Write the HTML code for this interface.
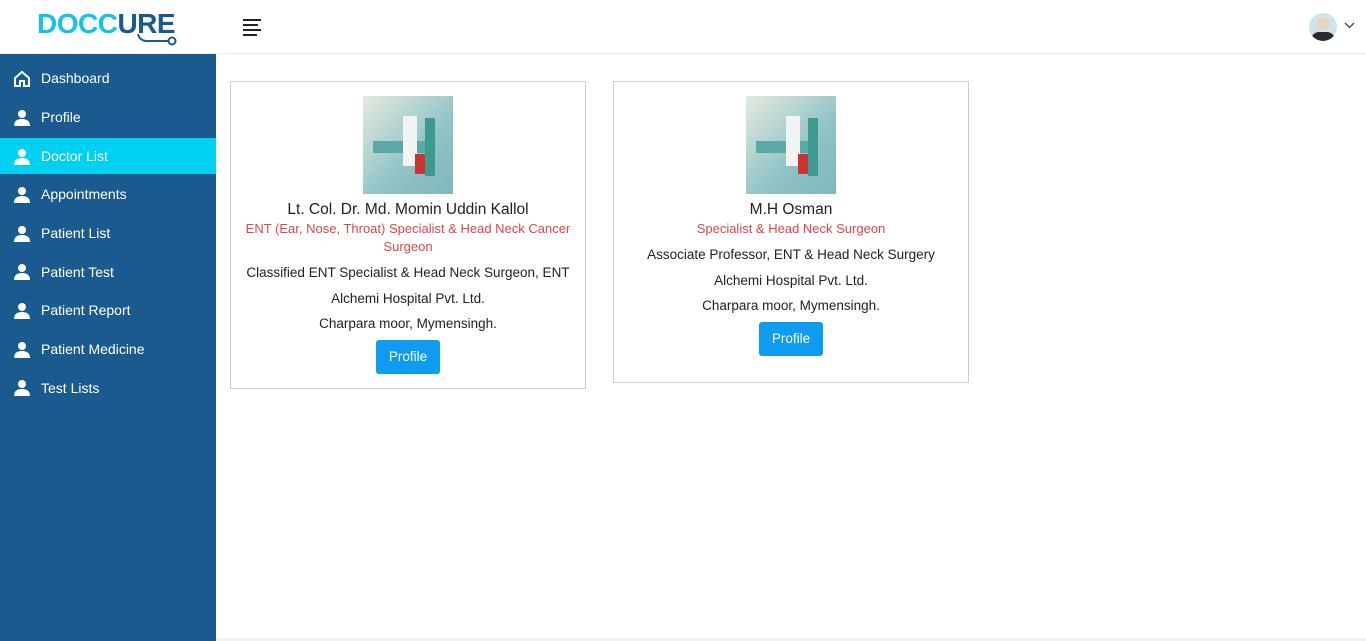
<!DOCTYPE html>
<html><head><meta charset="utf-8"><style>
*{margin:0;padding:0;box-sizing:border-box}
body{width:1366px;height:641px;overflow:hidden;font-family:"Liberation Sans",sans-serif;background:#fff;position:relative;color:#222}
.top{position:absolute;left:0;top:0;width:1366px;height:54px;border-bottom:1px solid #eee;background:#fff}
.logo{position:absolute;left:37px;top:8px;font-size:28px;font-weight:bold;letter-spacing:-0.5px;color:#15c3e8}
.logo span{color:#1b5a8e}
.side{position:absolute;left:0;top:54px;width:216px;height:587px;background:#1b5a8e}
.item{height:38.7px;display:flex;align-items:center;color:#fff;font-size:14px;padding-left:13px}
.item svg{margin-right:10px}
.item.act{background:#00d0f1;height:36px;margin-top:2px;margin-bottom:0.7px}
.card{position:absolute;border:1px solid #ccc;width:356px;text-align:center}
.img{width:90px;height:98px;margin:14px auto 6px;background:linear-gradient(135deg,#e6eadf,#8fc3c6 60%,#7fb8bb);position:relative;overflow:hidden}
.name{font-size:15.5px;color:#222;line-height:20px}
.spec{font-size:13px;color:#e0464a;line-height:18px;padding:0 10px}
.p{font-size:13.5px;line-height:25.5px;color:#222}
.btn{display:inline-block;background:#0d9cf0;color:#fff;font-size:13.5px;padding:0 13px;height:34px;line-height:34px;border-radius:3px;margin-top:3px}
</style></head><body>
<div class="top">
<div class="logo">DOCC<span>URE</span></div>
<svg style="position:absolute;left:135px;top:34px" width="44" height="12"><path d="M3 0 Q5 8 15 7 L33 7" stroke="#1b5a8e" stroke-width="2" fill="none"/><circle cx="37" cy="7" r="3.5" stroke="#1b5a8e" stroke-width="2" fill="none"/></svg>
<svg style="position:absolute;left:243px;top:19px" width="19" height="17"><path d="M0 1H18M0 6H15M0 11H18M0 16H14" stroke="#222" stroke-width="2"/></svg>
<div style="position:absolute;left:1309px;top:13px;width:28px;height:28px;border-radius:50%;background:radial-gradient(circle at 50% 40%,#e8d4c4 0 30%,#cde4ea 31%);overflow:hidden"><div style="position:absolute;left:2px;top:19px;width:24px;height:12px;background:#2a2a33;border-radius:8px 8px 0 0"></div></div>
<svg style="position:absolute;left:1344px;top:22px" width="11" height="7"><path d="M1 1L5.5 5.5L10 1" stroke="#444" stroke-width="1.3" fill="none"/></svg>
</div>
<div class="side" style="padding-top:5px">
<div class="item"><svg width="18" height="17"><path d="M2 8L9 2L16 8V16H11V11H7V16H2Z" stroke="#fff" stroke-width="2" fill="none"/></svg>Dashboard</div>
<div class="item"><svg width="18" height="17"><circle cx="9" cy="5" r="4" fill="#fff"/><path d="M1 17Q1 10 9 10Q17 10 17 17Z" fill="#fff"/></svg>Profile</div>
<div class="item act"><svg width="18" height="17"><circle cx="9" cy="5" r="4" fill="#fff"/><path d="M1 17Q1 10 9 10Q17 10 17 17Z" fill="#fff"/></svg>Doctor List</div>
<div class="item"><svg width="18" height="17"><circle cx="9" cy="5" r="4" fill="#fff"/><path d="M1 17Q1 10 9 10Q17 10 17 17Z" fill="#fff"/></svg>Appointments</div>
<div class="item"><svg width="18" height="17"><circle cx="9" cy="5" r="4" fill="#fff"/><path d="M1 17Q1 10 9 10Q17 10 17 17Z" fill="#fff"/></svg>Patient List</div>
<div class="item"><svg width="18" height="17"><circle cx="9" cy="5" r="4" fill="#fff"/><path d="M1 17Q1 10 9 10Q17 10 17 17Z" fill="#fff"/></svg>Patient Test</div>
<div class="item"><svg width="18" height="17"><circle cx="9" cy="5" r="4" fill="#fff"/><path d="M1 17Q1 10 9 10Q17 10 17 17Z" fill="#fff"/></svg>Patient Report</div>
<div class="item"><svg width="18" height="17"><circle cx="9" cy="5" r="4" fill="#fff"/><path d="M1 17Q1 10 9 10Q17 10 17 17Z" fill="#fff"/></svg>Patient Medicine</div>
<div class="item"><svg width="18" height="17"><circle cx="9" cy="5" r="4" fill="#fff"/><path d="M1 17Q1 10 9 10Q17 10 17 17Z" fill="#fff"/></svg>Test Lists</div>
</div>
<div class="card" style="left:230px;top:81px;height:308px">
<div class="img"><div style="position:absolute;left:10px;top:45px;width:60px;height:12px;background:#5aa9a8"></div><div style="position:absolute;left:40px;top:20px;width:14px;height:50px;background:#f2f4f4"></div><div style="position:absolute;left:62px;top:22px;width:10px;height:58px;background:#3c9a8f"></div><div style="position:absolute;left:52px;top:58px;width:10px;height:20px;background:#c8342f"></div></div>
<div class="name">Lt. Col. Dr. Md. Momin Uddin Kallol</div>
<div class="spec">ENT (Ear, Nose, Throat) Specialist &amp; Head Neck Cancer Surgeon</div>
<div class="p" style="margin-top:4px">Classified ENT Specialist &amp; Head Neck Surgeon, ENT</div>
<div class="p">Alchemi Hospital Pvt. Ltd.</div>
<div class="p">Charpara moor, Mymensingh.</div>
<div class="btn">Profile</div>
</div>
<div class="card" style="left:613px;top:81px;height:302px">
<div class="img"><div style="position:absolute;left:10px;top:45px;width:60px;height:12px;background:#5aa9a8"></div><div style="position:absolute;left:40px;top:20px;width:14px;height:50px;background:#f2f4f4"></div><div style="position:absolute;left:62px;top:22px;width:10px;height:58px;background:#3c9a8f"></div><div style="position:absolute;left:52px;top:58px;width:10px;height:20px;background:#c8342f"></div></div>
<div class="name">M.H Osman</div>
<div class="spec">Specialist &amp; Head Neck Surgeon</div>
<div class="p" style="margin-top:4px">Associate Professor, ENT &amp; Head Neck Surgery</div>
<div class="p">Alchemi Hospital Pvt. Ltd.</div>
<div class="p">Charpara moor, Mymensingh.</div>
<div class="btn">Profile</div>
</div>
<div style="position:absolute;left:216px;top:638px;width:1150px;height:3px;background:#f2f2f2"></div>
</body></html>
